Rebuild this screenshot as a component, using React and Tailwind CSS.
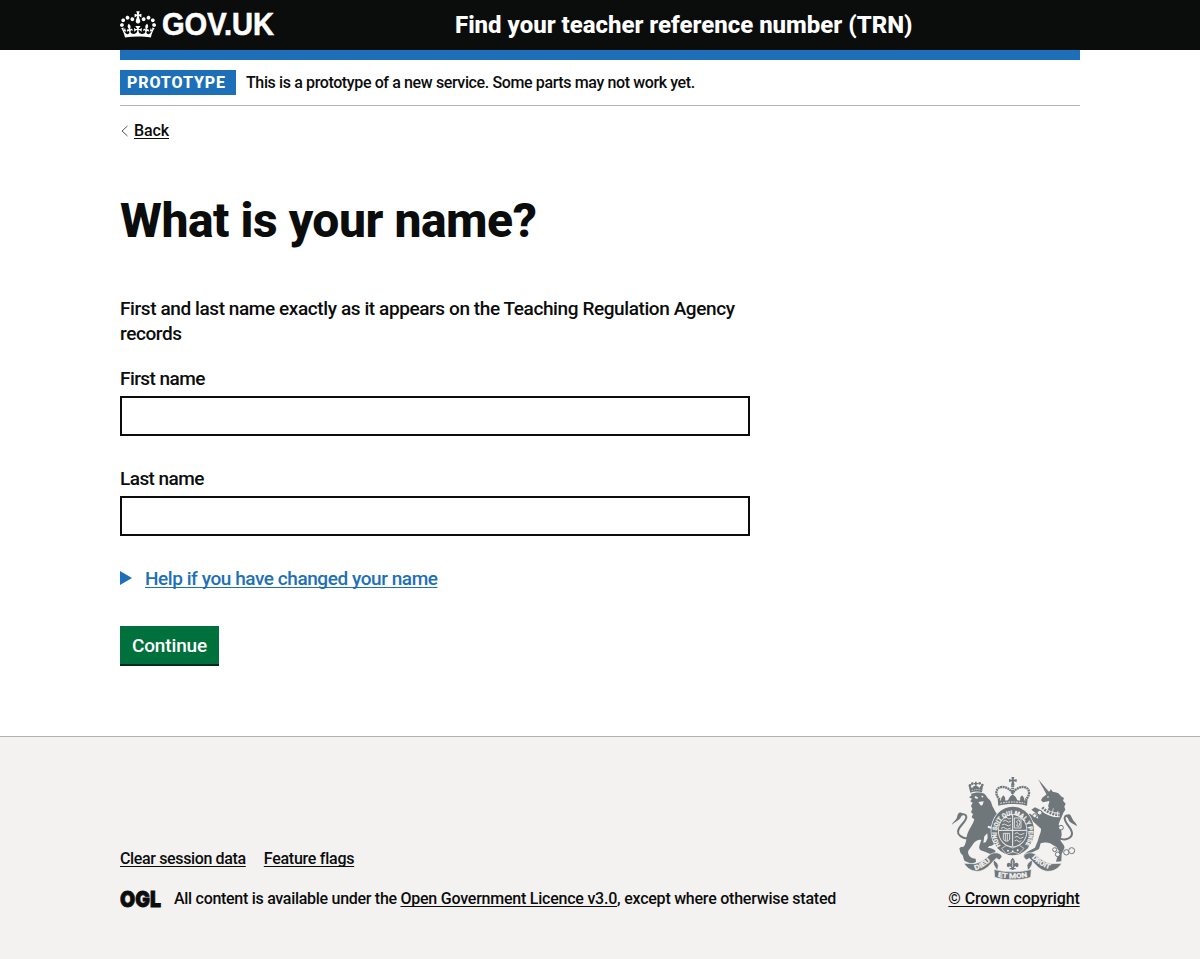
import React from "react";

function Crown() {
  return (
    <svg aria-hidden="true" viewBox="0 0 132 97" className="mb-[2px] h-[27px] w-9 shrink-0 fill-white">
      <path
        fillRule="evenodd"
        d="M25 30.2c3.5 1.5 7.7-.2 9.1-3.7 1.5-3.6-.2-7.8-3.9-9.2-3.6-1.4-7.6.3-9.1 3.9-1.4 3.5.3 7.5 3.9 9zM9 39.5c3.6 1.5 7.8-.2 9.2-3.7 1.5-3.6-.2-7.8-3.9-9.1-3.6-1.5-7.6.2-9.1 3.8-1.4 3.5.3 7.5 3.8 9zM4.4 57.2c3.5 1.5 7.7-.2 9.1-3.8 1.5-3.6-.2-7.7-3.9-9.1-3.5-1.5-7.6.3-9.1 3.8-1.4 3.5.3 7.6 3.9 9.1zm38.3-21.4c3.5 1.5 7.7-.2 9.1-3.8 1.5-3.6-.2-7.7-3.9-9.1-3.6-1.5-7.6.3-9.1 3.8-1.3 3.6.4 7.7 3.9 9.1zm64.4-5.6c-3.6 1.5-7.8-.2-9.1-3.7-1.5-3.6.2-7.8 3.8-9.2 3.6-1.4 7.7.3 9.2 3.9 1.3 3.5-.4 7.5-3.9 9zm15.9 9.3c-3.6 1.5-7.7-.2-9.1-3.7-1.5-3.6.2-7.8 3.7-9.1 3.6-1.5 7.7.2 9.2 3.8 1.5 3.5-.3 7.5-3.8 9zm4.7 17.7c-3.6 1.5-7.8-.2-9.2-3.8-1.5-3.6.2-7.7 3.9-9.1 3.6-1.5 7.7.3 9.2 3.8 1.3 3.5-.4 7.6-3.9 9.1zM89.3 35.8c-3.6 1.5-7.8-.2-9.2-3.8-1.4-3.6.2-7.7 3.9-9.1 3.6-1.5 7.7.3 9.2 3.8 1.4 3.6-.3 7.7-3.9 9.1zM69.7 17.7l8.9 4.7V9.3l-8.9 2.8c-.2-.3-.5-.6-.9-.9L72.4 0H59.6l3.5 11.2c-.3.3-.6.5-.9.9l-8.8-2.8v13.1l8.8-4.7c.3.3.6.7.9.9l-5 15.4v.1c-.2.8-.4 1.6-.4 2.4 0 4.1 3.1 7.5 7 8.1h.2c.3 0 .7.1 1 .1.4 0 .7 0 1-.1h.2c4-.6 7.1-4.1 7.1-8.1 0-.8-.1-1.7-.4-2.4V34l-5.1-15.4c.4-.2.7-.6 1-.9zM66 92.8c16.9 0 32.8 1.1 47.1 3.2 4-16.9 8.9-26.7 14-33.5l-9.6-3.4c1 4.9 1.1 7.2 0 10.2-1.5-1.4-3-4.3-4.2-8.7L108.6 76c2.8-2 5-3.2 7.5-3.3-4.4 9.4-10 11.9-13.6 11.2-4.3-.8-6.3-4.6-5.6-7.9 1-4.7 5.7-5.9 8-.5 4.3-8.7-3-11.4-7.6-8.8 7.1-7.2 7.9-13.5 2.1-21.1-8 6.1-8.1 12.3-4.5 20.8-4.7-5.4-12.1-2.5-9.5 6.2 3.4-5.2 7.9-2 7.2 3.1-.6 4.3-6.4 7.8-13.5 7.2-10.3-.9-10.9-8-11.2-13.8 2.5-.5 7.1 1.8 11 7.3L80.2 60c-4.1 4.4-8 5.3-12.3 5.4 1.4-4.4 8-11.6 8-11.6H55.5s6.4 7.2 7.9 11.6c-4.2-.1-8-1-12.3-5.4l1.4 16.4c3.9-5.5 8.5-7.7 10.9-7.3-.3 5.8-.9 12.8-11.1 13.8-7.2.6-12.9-2.9-13.5-7.2-.7-5 3.8-8.3 7.1-3.1 2.7-8.7-4.6-11.6-9.4-6.2 3.7-8.5 3.6-14.7-4.6-20.8-5.8 7.6-5 13.9 2.2 21.1-4.7-2.6-11.9.1-7.7 8.8 2.3-5.5 7.1-4.2 8.1.5.7 3.3-1.3 7.1-5.7 7.9-3.5.7-9-1.8-13.5-11.2 2.5.1 4.7 1.3 7.5 3.3l-4.7-15.4c-1.2 4.4-2.7 7.2-4.3 8.7-1.1-3-.9-5.3 0-10.2l-9.5 3.4c5 6.9 9.9 16.7 14 33.5 14.8-2.1 30.8-3.2 47.7-3.2z"
      />
    </svg>
  );
}

function RoyalArms() {
  const ink = "#6f777b";
  const paper = "#f3f2f1";
  const motto = { fill: paper, stroke: paper, strokeWidth: 0.8, fontFamily: "Roboto, sans-serif", fontWeight: 700, letterSpacing: 0, lengthAdjust: "spacingAndGlyphs" };
  return (
    <svg aria-hidden="true" viewBox="33 36 378 309" className="h-[103px] w-[126px]" fill={ink} stroke="none">
      {/* lion: tail, crown, head and body */}
      <path d="M92 219c-14 3-31-1-37-13-8-18 24-33 24-50 0-9-12-11-20-3" fill="none" stroke={ink} strokeWidth="6" />
      <path d="M36 179c2-8 10-11 14-19 3-7 1-13 10-18l10 4c-7 5-6 12-12 17-6 6-14 8-22 16z" />
      <path d="M91 83l-5-20c6-1 9 3 10 8 2-6 5-9 11-9s9 3 11 8c1-5 5-9 11-8l-3 20c-11-4-24-3-35 1z" />
      <path d="M105 50h5v12h-5zM101 54h13v4h-13z" />
      <circle cx="90" cy="61" r="4" />
      <circle cx="97" cy="56" r="4" />
      <circle cx="119" cy="55" r="4" />
      <circle cx="127" cy="60" r="4" />
      <path d="M95 77q15-6 29-1" stroke={paper} strokeWidth="2" fill="none" strokeDasharray="4 3" />
      <path d="M92 87c10-5 30-7 41-1 6 4 8 12 14 17 9 7 7 18 13 25 4 7 6 14 12 19l-6 15c-3 7-3 16-6 22 4 8 7 18 8 28 1 18-6 31-20 31l-5 5c9 1 19 3 24 10l-5 8-11 1-16-7-13-4c-6-5-5-11-3-17l5-14c-8-2-20 4-26 14l-13 18c-3 9 4 19 13 23l9 1 1 10-14 5-20-8c-5-7-3-11-6-17-8-5-8-13-10-21l5-4 8-1c9-11 7-23 10-34 5-19 17-30 22-48l-8-6 4-10-6-5 4-11-4-8 5-10-7-4 5-8-9-4 8-6-4-7z" />
      <path d="M105 93l9 4-2 5-8-3zM123 92l8 1-4 5zM115 111l16-2-3 10-5 3z" fill={paper} />
      {/* gap between the forelegs and between body and hind leg */}
      <path d="M144 182l12 3-3 6-10-3zM133 214l9-9 1 14-6 13-7 1z" fill={paper} />

      {/* unicorn: horn, head, chained body and tail */}
      <path d="M294 42l36 42-9 7z" />
      <path d="M300 60l29 28" stroke={paper} strokeWidth="1" strokeDasharray="2 5" />
      <path d="M332 72l7 9c13-1 20 6 24 13l9 5-3 8 8 9-4 9 3 9-6 9c-5 15-12 24-14 36 8 11 9 21 9 32l-4 14c5 10 15 18 12 25l-8 17-1 22-16 1 4-15 5-16-8-13-19-11c-9-4-21-2-28 0l-5 17-12 6-15 7-9 16-10-10 11-11 23-12 9-22c3-15 10-24 9-35l-23-21-13-10-10-12 14-2 8 8 16 7-5-15-16-12 11-7 18 9 13 10 9-18c-2-8 4-15 3-20l-19 4-6-6 4-8 15-12 9-10z" />
      <circle cx="324" cy="96" r="2.5" fill={paper} />
      <path d="M306 128c12 14 32 22 53 22" stroke={paper} strokeWidth="14" fill="none" />
      <path d="M307 127c12 14 32 22 52 23" stroke={ink} strokeWidth="8" fill="none" strokeDasharray="6 3" />
      <path d="M326 126l-6 12M340 130l-3 14M354 138l-3 12" stroke={paper} strokeWidth="2" />
      <path d="M360 221c16 6 35-1 36-15 1-18-24-31-22-48 1-8 10-9 17-2" fill="none" stroke={ink} strokeWidth="6" />
      <path d="M411 184c-2-12-10-14-14-23-3-6-4-11-11-14l-8 8c8 3 6 10 12 16 6 5 13 6 21 13z" />
      <g fill={paper} stroke={ink} strokeWidth="3">
        <circle cx="299" cy="143" r="7" />
        <circle cx="284" cy="152" r="6" />
        <circle cx="363" cy="188" r="7" />
        <circle cx="344" cy="254" r="6" />
        <circle cx="353" cy="268" r="7" />
        <circle cx="379" cy="262" r="8" />
        <circle cx="395" cy="257" r="9" />
      </g>

      {/* royal crown */}
      <path d="M214 36h9l-2 8 9-2v9l-9-2 3 12h-11l3-12-9 2v-9l9 2z" />
      <g fill="none" stroke={ink}>
        <path d="M180 104c-16-13-14-37 5-38 14-1 24 7 33 17 9-10 20-18 33-17 19 1 22 25 5 38" strokeWidth="7" strokeDasharray="6 1.5" />
        <path d="M218 61v25" strokeWidth="9" strokeDasharray="5 2" />
      </g>
      <path d="M175 122l-2-21 9 6 3-10 5-6 5 6 1 10 8-1 5-10 9-8 9 8 5 10 8 1 1-10 5-6 5 6 3 10 9-6-2 21c-27-7-60-7-86 0z" />
      <path d="M181 115q37-8 74 0" fill="none" stroke={paper} strokeWidth="3" strokeDasharray="5 3" />

      {/* garter and quartered shield */}
      <ellipse cx="218" cy="198" rx="66" ry="75" fill={paper} />
      <ellipse cx="218" cy="198" rx="64" ry="73" />
      <ellipse cx="218" cy="197" rx="44" ry="50" fill={paper} />
      <ellipse cx="218" cy="197" rx="41.5" ry="47.5" />
      <path d="M218 150v94M176 196h84" stroke={paper} strokeWidth="3" />
      <g fill="none" stroke={paper} strokeWidth="2.5">
        <path d="M189 169q8-6 12 0t12-1M186 180q8-6 13 0t14-1M183 190q8-6 13 0t16-1M193 160q7-5 10 0t10-1" />
        <path d="M223 159h20v30h-20zM230 183l3-8-4-5 8-6 3 8-3 12z" />
        <path d="M190 205h19v17c-2 9-17 9-19-1zM196 206v22M202 206v22" />
        <path d="M224 206q8-6 12 0t17-1M224 217q8-6 12 0t14-1M224 228q7-6 10 0t10-1" />
      </g>
      <path id="garter-line" d="M182 242A48 55 0 1 1 254 242" fill="none" />
      <text fontSize="19" {...motto}>
        <textPath href="#garter-line" textLength="236" lengthAdjust="spacingAndGlyphs">HONI SOIT QUI MAL Y PENSE</textPath>
      </text>
      <path d="M185 250l14-8 19 7 20-8 14 9-15 16-19-5-19 7z" stroke={paper} strokeWidth="2" />
      <circle cx="204" cy="257" r="3" fill={paper} />
      <circle cx="218" cy="259" r="3" fill={paper} />
      <circle cx="233" cy="256" r="3" fill={paper} />

      {/* ribbon */}
      <g stroke={paper} strokeWidth="2">
        <path d="M161 284c-4 13 4 24 13 33l-6 14c25 8 76 8 101 0l-6-14c9-9 17-20 13-33-5 5-13 9-15 17l2 14c-26 6-64 6-90 0l2-14c-2-8-9-12-14-17z" />
        <path d="M72 295l32 1c17-4 32-13 45-27 14-10 35-6 37 7l-8 9-9-5c-13 10-24 32-48 38-22 4-39-6-49-23z" />
        <path d="M365 295l-32 1c-17-4-32-13-45-27-14-10-35-6-37 7l8 9 9-5c13 10 24 32 48 38 22 4 39-6 49-23z" />
        <path d="M162 313c33 10 79 10 112 0l-2 24c-28 10-80 10-108 0z" />
      </g>
      <path id="left-line" d="M106 315Q134 308 159 280" fill="none" />
      <path id="right-line" d="M275 278Q303 308 339 315" fill="none" />
      <path id="base-line" d="M173 335Q218 344 265 335" fill="none" />
      <text fontSize="20" {...motto}><textPath href="#left-line" textLength="54" lengthAdjust="spacingAndGlyphs">DIEU</textPath></text>
      <text fontSize="20" {...motto}><textPath href="#right-line" textLength="64" lengthAdjust="spacingAndGlyphs">DROIT</textPath></text>
      <text fontSize="20" {...motto}><textPath href="#base-line" textLength="90" lengthAdjust="spacingAndGlyphs">ET MON</textPath></text>

      {/* fleur-de-lis */}
      <path d="M218 278c8 8 8 15 4 22 4-11 16-7 13 3-2 5-7 4-8 1-3 1-5 2-5 5h5v4h-6v2h-6v-2h-6v-4h5c0-3-2-4-5-5-1 3-6 4-8-1-3-10 9-14 13-3-4-7-4-14 4-22z" />
      <path d="M218 286v20" stroke={paper} strokeWidth="2" />
    </svg>
  );
}

function Field({ id, label }) {
  return (
    <div className="flex flex-col gap-[5px]">
      <label htmlFor={id} className="text-[19px] leading-[25px] tracking-[-0.56px]">{label}</label>
      <input id={id} type="text" className="h-10 w-[630px] border-2 border-[#0b0c0c] bg-white px-1 outline-none" />
    </div>
  );
}

function FooterLink({ children }) {
  return (
    <a href="#" className="underline decoration-1 underline-offset-2 [text-decoration-skip-ink:none]">
      {children}
    </a>
  );
}

export default function App() {
  return (
    <div className="flex h-[959px] flex-col overflow-hidden bg-white font-['Roboto',sans-serif] font-medium tracking-[-0.41px] text-[#0b0c0c]">
      <header className="bg-[#0b0c0c] text-white">
        <div className="mx-auto flex h-[50px] w-[960px] items-center">
          <a href="#" className="flex w-[335px] items-center">
            <Crown />
            <svg className="ml-1 h-10 w-[124px]" viewBox="0 0 124 40">
              <text x="2" y="29.5" textLength="112" lengthAdjust="spacingAndGlyphs" className="fill-white stroke-white font-['Liberation_Sans',sans-serif] text-[30.5px] font-bold tracking-normal" strokeWidth="0.6">GOV.UK</text>
            </svg>
          </a>
          <a href="#" className="text-2xl font-extrabold leading-[30px] tracking-[-0.01px]">Find your teacher reference number (TRN)</a>
        </div>
      </header>

      <div className="mx-auto flex w-[960px] grow flex-col">
        <div className="h-[10px] bg-[#1d70b8]" />
        <div className="flex h-[46px] items-center gap-[10px] border-b border-[#b1b4b6]">
          <strong className="flex h-[25px] w-[116px] items-center bg-[#1d70b8] pl-[7px] text-base font-extrabold tracking-[0.9px] text-white">PROTOTYPE</strong>
          <span className="text-base leading-5 tracking-[-0.38px]">This is a prototype of a new service. Some parts may not work yet.</span>
        </div>
        <a href="#" className="mt-[15px] flex h-5 items-center self-start text-base leading-5 tracking-[-0.1px]">
          <svg className="mr-[5px] h-3 w-[9px]" viewBox="0 0 9 12" fill="none" stroke="#505a5f"><path d="M7.5 1L2 6l5.500 5" /></svg>
          <FooterLink>Back</FooterLink>
        </a>
        <main className="flex flex-col items-start pt-[55px]">
          <h1 className="text-5xl font-extrabold leading-[50px] tracking-[-0.46px]">What is your name?</h1>
          <p className="mt-[50px] w-[630px] text-[19px] leading-[25px]">
            First and last name exactly as it appears on the Teaching Regulation Agency records
          </p>
          <div className="mt-5 flex flex-col gap-[30px]">
            <Field id="first-name" label="First name" />
            <Field id="last-name" label="Last name" />
          </div>
          <div className="mt-[30px] flex h-[25px] items-center text-[19px] leading-[25px] tracking-[-0.44px] text-[#1d70b8]">
            <svg className="mb-px mr-[13px] h-[14px] w-3" viewBox="0 0 12 14"><path d="M0 0l12 7L0 14z" fill="currentColor" /></svg>
            <FooterLink>Help if you have changed your name</FooterLink>
          </div>
          <button type="button" className="mt-[35px] h-10 w-[99px] border-b-2 border-[#002d18] bg-[#00703c] text-[19px] leading-[19px] tracking-[-0.15px] text-white">Continue</button>
        </main>
      </div>

      <footer className="h-[223px] border-t border-[#b1b4b6] bg-[#f3f2f1] text-base leading-5 tracking-[-0.2px]">
        <div className="mx-auto flex w-[960px] items-end justify-between pt-10">
          <div className="flex flex-col gap-5">
            <div className="flex gap-[18px]">
              <span className="tracking-[-0.36px]"><FooterLink>Clear session data</FooterLink></span>
              <span className="tracking-[-0.26px]"><FooterLink>Feature flags</FooterLink></span>
            </div>
            <div className="flex h-5 items-center tracking-[-0.23px]">
              <svg className="ml-[-2px] mr-[9px] h-[26px] w-[47px]" viewBox="0 0 47 26">
                <text x="2" y="20.500" textLength="41" lengthAdjust="spacingAndGlyphs" className="fill-[#0b0c0c] stroke-[#0b0c0c] font-['Inter',sans-serif] text-[22px] font-black tracking-normal" strokeWidth="0.8">OGL</text>
              </svg>
              <span><span className="tracking-[-0.29px]">All content is available under the </span><FooterLink>Open Government Licence v3.0</FooterLink>, except where otherwise stated</span>
            </div>
          </div>
          <div className="flex w-[132px] flex-col items-center gap-[9px]">
            <RoyalArms />
            <span className="whitespace-nowrap tracking-[-0.13px]"><FooterLink>© Crown copyright</FooterLink></span>
          </div>
        </div>
      </footer>
    </div>
  );
}
